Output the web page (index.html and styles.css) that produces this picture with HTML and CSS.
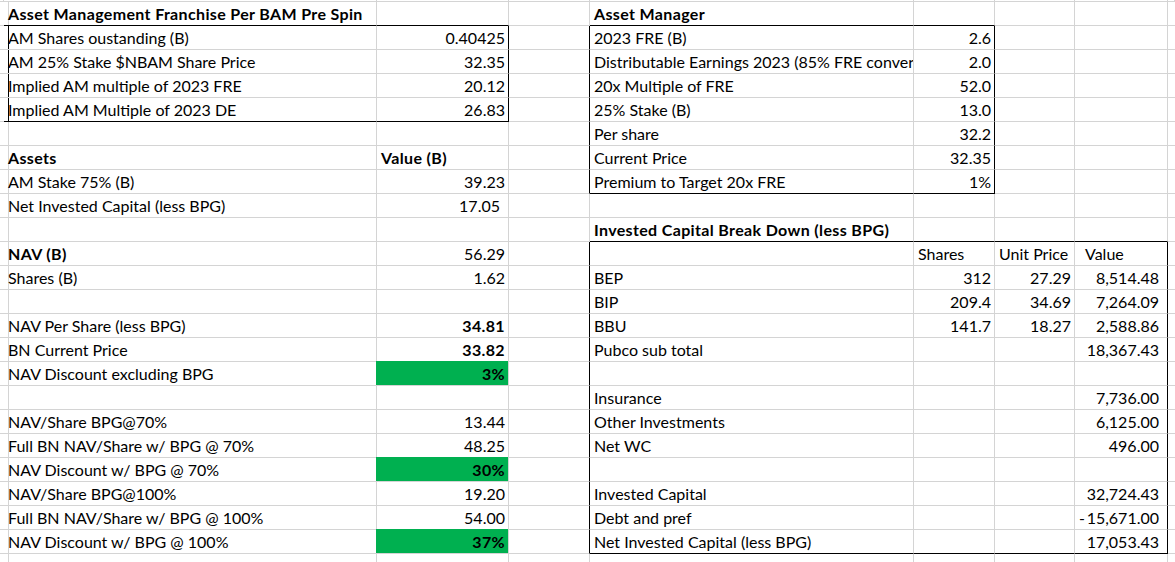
FILE: index.html
```html
<!DOCTYPE html>
<html lang="en">
<head>
<meta charset="utf-8">
<title>BN NAV</title>
<link rel="stylesheet" href="styles.css">
</head>
<body>
<div class="sheet">
  <div class="row r0"><div class="c"></div><div class="c"></div><div class="c"></div><div class="c"></div><div class="c"></div><div class="c"></div><div class="c"></div><div class="c"></div><div class="c"></div></div>

  <div class="row"><div class="c"></div><div class="c b bb">Asset Management Franchise Per BAM Pre Spin</div><div class="c bb"></div><div class="c"></div><div class="c b bb">Asset Manager</div><div class="c bb"></div><div class="c"></div><div class="c"></div><div class="c"></div></div>

  <div class="row"><div class="c br"></div><div class="c">AM Shares oustanding (B)</div><div class="c n br">0.40425</div><div class="c br"></div><div class="c">2023 FRE (B)</div><div class="c n br">2.6</div><div class="c"></div><div class="c"></div><div class="c"></div></div>

  <div class="row"><div class="c br"></div><div class="c">AM 25% Stake $NBAM Share Price</div><div class="c n br">32.35</div><div class="c br"></div><div class="c">Distributable Earnings 2023 (85% FRE conver</div><div class="c n br">2.0</div><div class="c"></div><div class="c"></div><div class="c"></div></div>

  <div class="row"><div class="c br"></div><div class="c">Implied AM multiple of 2023 FRE</div><div class="c n br">20.12</div><div class="c br"></div><div class="c">20x Multiple of FRE</div><div class="c n br">52.0</div><div class="c"></div><div class="c"></div><div class="c"></div></div>

  <div class="row"><div class="c br"></div><div class="c bb">Implied AM Multiple of 2023 DE</div><div class="c n br bb">26.83</div><div class="c br"></div><div class="c">25% Stake (B)</div><div class="c n br">13.0</div><div class="c"></div><div class="c"></div><div class="c"></div></div>

  <div class="row"><div class="c"></div><div class="c"></div><div class="c"></div><div class="c br"></div><div class="c">Per share</div><div class="c n br">32.2</div><div class="c"></div><div class="c"></div><div class="c"></div></div>

  <div class="row"><div class="c"></div><div class="c b">Assets</div><div class="c b">Value (B)</div><div class="c br"></div><div class="c">Current Price</div><div class="c n br">32.35</div><div class="c"></div><div class="c"></div><div class="c"></div></div>

  <div class="row"><div class="c"></div><div class="c">AM Stake 75% (B)</div><div class="c n">39.23</div><div class="c br"></div><div class="c bb">Premium to Target 20x FRE</div><div class="c n br bb">1%</div><div class="c"></div><div class="c"></div><div class="c"></div></div>

  <div class="row"><div class="c"></div><div class="c">Net Invested Capital (less BPG)</div><div class="c acc">17.05</div><div class="c"></div><div class="c"></div><div class="c"></div><div class="c"></div><div class="c"></div><div class="c"></div></div>

  <div class="row"><div class="c"></div><div class="c"></div><div class="c"></div><div class="c"></div><div class="c b bb">Invested Capital Break Down (less BPG)</div><div class="c bb"></div><div class="c bb"></div><div class="c bb"></div><div class="c"></div></div>

  <div class="row"><div class="c"></div><div class="c b">NAV (B)</div><div class="c n">56.29</div><div class="c br"></div><div class="c"></div><div class="c">Shares</div><div class="c">Unit Price</div><div class="c br hv">Value</div><div class="c"></div></div>

  <div class="row"><div class="c"></div><div class="c">Shares (B)</div><div class="c n">1.62</div><div class="c br"></div><div class="c">BEP</div><div class="c n">312</div><div class="c n">27.29</div><div class="c acc br">8,514.48</div><div class="c"></div></div>

  <div class="row"><div class="c"></div><div class="c"></div><div class="c"></div><div class="c br"></div><div class="c">BIP</div><div class="c n">209.4</div><div class="c n">34.69</div><div class="c acc br">7,264.09</div><div class="c"></div></div>

  <div class="row"><div class="c"></div><div class="c">NAV Per Share (less BPG)</div><div class="c n b">34.81</div><div class="c br"></div><div class="c">BBU</div><div class="c n">141.7</div><div class="c n">18.27</div><div class="c acc br">2,588.86</div><div class="c"></div></div>

  <div class="row"><div class="c"></div><div class="c">BN Current Price</div><div class="c n b">33.82</div><div class="c br"></div><div class="c">Pubco sub total</div><div class="c"></div><div class="c"></div><div class="c acc br">18,367.43</div><div class="c"></div></div>

  <div class="row"><div class="c"></div><div class="c">NAV Discount excluding BPG</div><div class="c n b g">3%</div><div class="c br"></div><div class="c"></div><div class="c"></div><div class="c"></div><div class="c br"></div><div class="c"></div></div>

  <div class="row"><div class="c"></div><div class="c"></div><div class="c"></div><div class="c br"></div><div class="c">Insurance</div><div class="c"></div><div class="c"></div><div class="c acc br">7,736.00</div><div class="c"></div></div>

  <div class="row"><div class="c"></div><div class="c">NAV/Share BPG@70%</div><div class="c n">13.44</div><div class="c br"></div><div class="c">Other Investments</div><div class="c"></div><div class="c"></div><div class="c acc br">6,125.00</div><div class="c"></div></div>

  <div class="row"><div class="c"></div><div class="c">Full BN NAV/Share w/ BPG @ 70%</div><div class="c n">48.25</div><div class="c br"></div><div class="c">Net WC</div><div class="c"></div><div class="c"></div><div class="c acc br">496.00</div><div class="c"></div></div>

  <div class="row"><div class="c"></div><div class="c">NAV Discount w/ BPG @ 70%</div><div class="c n b g">30%</div><div class="c br"></div><div class="c"></div><div class="c"></div><div class="c"></div><div class="c br"></div><div class="c"></div></div>

  <div class="row"><div class="c"></div><div class="c">NAV/Share BPG@100%</div><div class="c n">19.20</div><div class="c br"></div><div class="c">Invested Capital</div><div class="c"></div><div class="c"></div><div class="c acc br">32,724.43</div><div class="c"></div></div>

  <div class="row"><div class="c"></div><div class="c">Full BN NAV/Share w/ BPG @ 100%</div><div class="c n">54.00</div><div class="c br"></div><div class="c">Debt and pref</div><div class="c"></div><div class="c"></div><div class="c acc neg br"><span>-</span><span>15,671.00</span></div><div class="c"></div></div>

  <div class="row"><div class="c"></div><div class="c">NAV Discount w/ BPG @ 100%</div><div class="c n b g">37%</div><div class="c br"></div><div class="c bb">Net Invested Capital (less BPG)</div><div class="c bb"></div><div class="c bb"></div><div class="c acc br bb">17,053.43</div><div class="c"></div></div>

  <div class="row"><div class="c"></div><div class="c"></div><div class="c"></div><div class="c"></div><div class="c"></div><div class="c"></div><div class="c"></div><div class="c"></div><div class="c"></div></div>
</div>
</body>
</html>
```
FILE: styles.css
```css
html, body {
  margin: 0;
  padding: 0;
  background: #ffffff;
  overflow: hidden;
}

.sheet {
  display: grid;
  grid-template-columns: 4px 373px 132px 81px 324px 81px 80px 93px 7px;
  grid-template-rows: 2px repeat(24, 24px);
  width: 1175px;
  font-family: Lato, "Liberation Sans", sans-serif;
  font-size: 16px;
  color: #000000;
}

.row {
  display: contents;
}

.c {
  box-sizing: border-box;
  border-right: 1px solid #d4d4d4;
  border-bottom: 1px solid #d4d4d4;
  padding: 0 4px;
  line-height: 23px;
  white-space: nowrap;
  overflow: hidden;
}

.r0 .c {
  padding: 0;
  line-height: 1px;
}

.b {
  font-weight: 700;
  letter-spacing: 0.35px;
}

.n {
  text-align: right;
  padding-right: 3px;
}

.acc {
  text-align: right;
  padding-right: 8px;
}

.neg {
  display: flex;
  justify-content: space-between;
  padding-left: 4px;
}

.hv {
  padding-left: 10px;
}

.g {
  background: #00b050;
  box-shadow: -1px -1px 0 #00b050;
}

.bb {
  border-bottom-color: #000000;
}

.br {
  border-right-color: #000000;
}
```
